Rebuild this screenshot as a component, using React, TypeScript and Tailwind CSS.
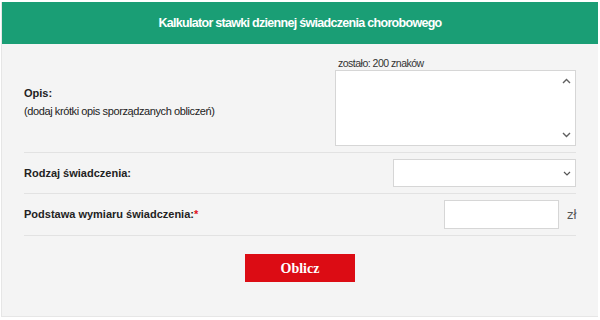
import React from "react";

const sans = { fontFamily: "Tahoma, 'DejaVu Sans', sans-serif" };

function ChevronUp() {
    return (
        <svg width="9" height="6" viewBox="0 0 9 6" fill="none" stroke="#606060" strokeWidth="1.4">
            <path d="M1 5 L4.5 1.5 L8 5" />
        </svg>
    );
}

function ChevronDown() {
    return (
        <svg width="9" height="6" viewBox="0 0 9 6" fill="none" stroke="#606060" strokeWidth="1.4">
            <path d="M1 1 L4.5 4.5 L8 1" />
        </svg>
    );
}

export default function App() {
    return (
        <div className="w-[600px] h-[320px] bg-white font-['Liberation_Sans',sans-serif]">
            <div className="ml-[1px] mt-[2px] w-[597px] h-[315px] border-b border-l border-[#e6e6e6] bg-[#f4f4f4]">
                <div className="h-[42px] bg-[#1a9e75] flex items-center justify-center">
                    <h1 className="text-white font-bold text-[12.5px] tracking-[-0.7px]">
                        Kalkulator stawki dziennej świadczenia chorobowego
                    </h1>
                </div>

                <div className="px-[22px]">
                    {/* opis */}
                    <div className="flex justify-between border-b border-[#e2e2e2] pt-[13px] pb-[6px]">
                        <div className="self-center mt-0 text-[11px] text-[#222] leading-[18px]">
                            <div className="font-bold">Opis:</div>
                            <div className="tracking-[-0.4px]">(dodaj krótki opis sporządzanych obliczeń)</div>
                        </div>
                        <div className="w-[241px]">
                            <div className="pl-[3px] text-[10.5px] tracking-[-0.5px] leading-[12px] text-[#333] mb-[1px]">zostało: 200 znaków</div>
                            <div className="h-[76px] flex border border-[#d6d6d6] bg-white">
                                <textarea className="flex-1 resize-none outline-none bg-transparent" />
                                <div className="w-[17px] flex flex-col items-center justify-between py-[7px]">
                                    <ChevronUp />
                                    <ChevronDown />
                                </div>
                            </div>
                        </div>
                    </div>

                    {/* rodzaj */}
                    <div className="h-[41px] flex items-center justify-between border-b border-[#e2e2e2]">
                        <span className="font-bold text-[11px] text-[#222]">Rodzaj świadczenia:</span>
                        <div className="w-[183px] h-[28px] border border-[#d6d6d6] bg-white flex items-center justify-end pr-[4px]">
                            <svg width="8" height="5" viewBox="0 0 8 5" fill="none" stroke="#555" strokeWidth="1.2">
                                <path d="M1 1 L4 4 L7 1" />
                            </svg>
                        </div>
                    </div>

                    {/* podstawa */}
                    <div className="h-[42px] flex items-center justify-between border-b border-[#e2e2e2]">
                        <span className="font-bold text-[11px] text-[#222]">
                            Podstawa wymiaru świadczenia:<span className="text-[#e0101a]">*</span>
                        </span>
                        <div className="flex items-center gap-[8px]">
                            <input className="w-[115px] h-[29px] border border-[#d6d6d6] bg-white outline-none" />
                            <span className="text-[12px] text-[#555] w-[9px]" style={sans}>zł</span>
                        </div>
                    </div>

                    <div className="flex justify-center pt-[18px]">
                        <button className="w-[110px] h-[28px] bg-[#dc0c14] text-white font-bold text-[14px] font-['Liberation_Serif',serif]">
                            Oblicz
                        </button>
                    </div>
                </div>
            </div>
        </div>
    );
}
